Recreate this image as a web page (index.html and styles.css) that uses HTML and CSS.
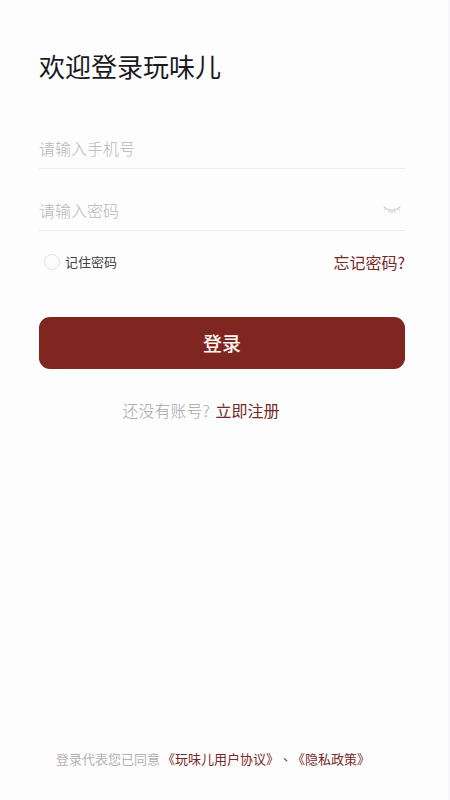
FILE: index.html
```html
<!DOCTYPE html>
<html lang="zh-CN">
<head>
<meta charset="utf-8">
<meta name="viewport" content="width=device-width, initial-scale=1">
<title>登录</title>
<link rel="stylesheet" href="styles.css">
</head>
<body>
<main class="page">
  <h1 class="title">欢迎登录玩味儿</h1>
  <form class="form">
    <div class="field">
      <input class="input" type="tel" placeholder="请输入手机号" aria-label="手机号">
    </div>
    <div class="field">
      <input class="input" type="password" placeholder="请输入密码" aria-label="密码">
      <button class="eye" type="button" aria-label="显示密码">
        <svg viewBox="0 0 18 10" width="18" height="10" fill="none" stroke="currentColor" stroke-linecap="round">
          <path d="M1 2Q9 9 17 2M2.8 3.5L1.4 5.2M6.6 5.2L5.8 7.4M11.4 5.2L12.2 7.4M15.2 3.5L16.6 5.2M9 5.6V7.8"/>
        </svg>
      </button>
    </div>
    <div class="options">
      <label class="remember"><input class="check" type="checkbox">记住密码</label>
      <a class="forgot" href="#">忘记密码?</a>
    </div>
    <button class="submit" type="submit">登录</button>
  </form>
  <p class="register">还没有账号?<a class="register-link" href="#">立即注册</a></p>
  <footer class="terms"><span>登录代表您已同意</span><span><a href="#">《玩味儿用户协议》</a><span class="separator" lang="zh-TW">、</span><a href="#">《隐私政策》</a></span></footer>
</main>
</body>
</html>
```
FILE: styles.css
```css
* {
  box-sizing: border-box;
}

body {
  margin: 0;
  background: #fefdfe;
  color: #1b191e;
  font-family: "Noto Sans CJK SC", sans-serif;
}

a {
  color: #742a27;
  text-decoration: none;
}

.page {
  display: flex;
  flex-direction: column;
  min-height: 100vh;
  padding: 46px 43px 28px 39px;
  border-right: 2px solid #f7f6f8;
}

.title {
  margin: 0 0 41px;
  font-size: 26px;
  font-weight: 400;
  line-height: 40px;
}

.field {
  display: flex;
  align-items: center;
  height: 42px;
  border-bottom: 1px solid #ededee;
}

.field + .field {
  margin-top: 20px;
}

.input {
  flex: 1;
  min-width: 0;
  height: 40px;
  padding: 0;
  border: 0;
  outline: 0;
  background: transparent;
  color: #1b191e;
  font: 16px/24px "Noto Sans CJK SC", sans-serif;
}

.input::placeholder {
  color: #b9b6b9;
  font-weight: 300;
}

.eye {
  display: flex;
  margin-right: 4px;
  padding: 0;
  border: 0;
  background: transparent;
  color: #c5c3c8;
}

.options {
  display: flex;
  align-items: center;
  justify-content: space-between;
  margin-top: 19px;
}

.remember {
  display: flex;
  align-items: center;
  gap: 5px;
  padding-left: 5px;
  color: #444246;
  font-size: 13px;
  line-height: 24px;
}

.check {
  appearance: none;
  width: 16px;
  height: 16px;
  margin: 0;
  border: 1px solid #e3dfe6;
  border-radius: 50%;
}

.check:checked {
  background: #7f2620;
}

.forgot {
  font-size: 16px;
  line-height: 24px;
}

.submit {
  display: block;
  width: 100%;
  height: 52px;
  margin-top: 43px;
  padding: 0;
  border: 0;
  border-radius: 11px;
  background: #7f2620;
  color: #fff6f4;
  font: 500 19px/28px "Noto Sans CJK SC", sans-serif;
}

.register {
  display: flex;
  justify-content: center;
  gap: 6px;
  margin: 29px 0 0;
  padding-right: 42px;
  color: #a5a3a5;
  font-size: 16px;
  font-weight: 300;
  line-height: 24px;
}

.register-link {
  font-weight: 400;
}

.terms {
  display: flex;
  gap: 2px;
  margin-top: auto;
  padding-left: 17px;
  color: #b3b0b3;
  font-size: 13px;
  line-height: 26px;
  text-spacing-trim: space-all;
}

.separator {
  color: #742a27;
  font-family: "Noto Sans CJK TC", sans-serif;
}
```
